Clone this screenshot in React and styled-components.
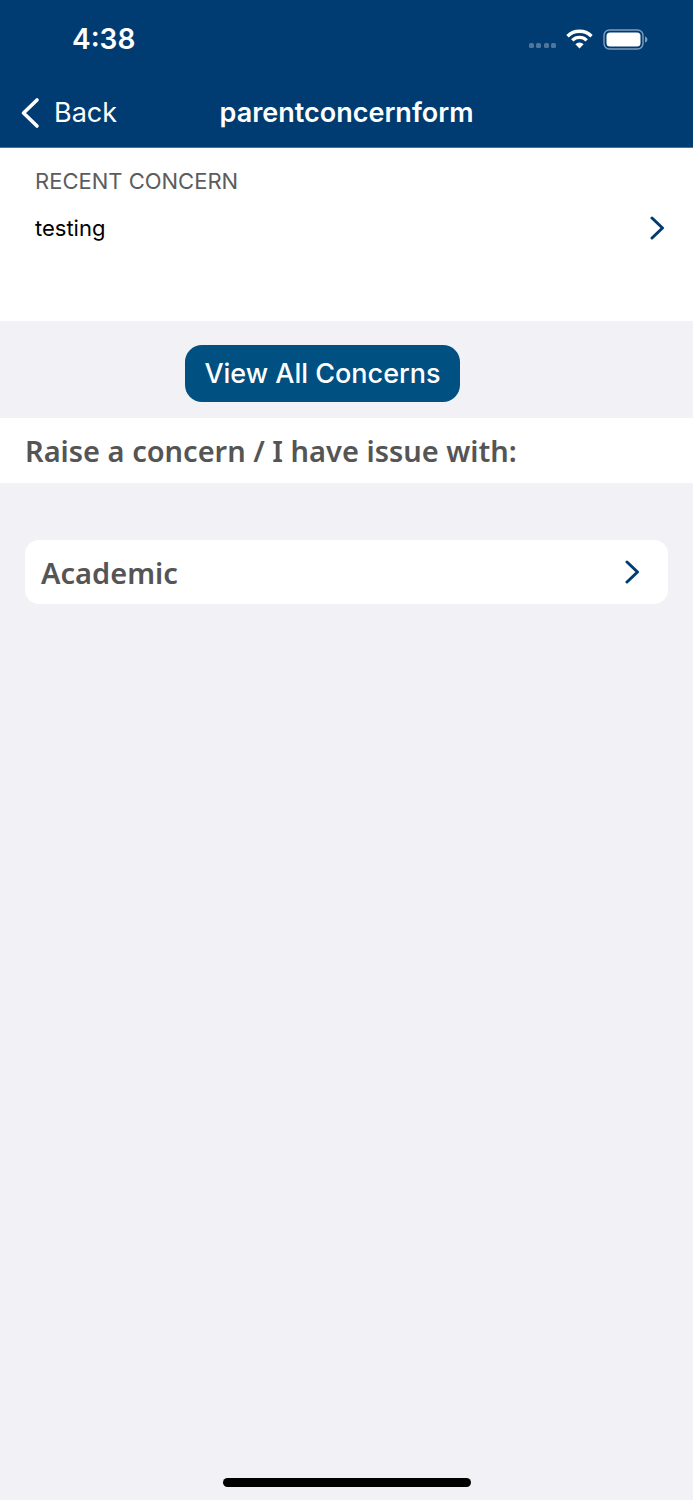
import styled, { createGlobalStyle } from "styled-components";

const GlobalStyle = createGlobalStyle`
  html, body {
    margin: 0;
    padding: 0;
    background: #f1f1f6;
  }
  * {
    box-sizing: border-box;
  }
`;

const App = () => {
  return (
    <Page>
      <GlobalStyle />
      <Header>
        <StatusBar>
          <Clock>4:38</Clock>
          <StatusIcons>
            <Signal>
              <Dot /><Dot /><Dot /><Dot />
            </Signal>
            <svg width="27" height="20" viewBox="0 0 27 20">
              <path d="M1.5 7.2 A17 17 0 0 1 25.5 7.2" fill="none" stroke="#fff" strokeWidth="3.4" />
              <path d="M6.3 11.4 A10.2 10.2 0 0 1 20.7 11.4" fill="none" stroke="#fff" strokeWidth="3.4" />
              <path d="M13.5 19.5 L9.4 15.2 A5.8 5.8 0 0 1 17.6 15.2 Z" fill="#fff" />
            </svg>
            <svg width="45" height="21" viewBox="0 0 45 21">
              <rect x="1" y="1" width="39" height="19" rx="5.5" fill="none" stroke="#7f9db8" strokeWidth="1.4" />
              <rect x="3.5" y="3.5" width="34" height="14" rx="3.5" fill="#fff" />
              <path d="M42 7.5 C43.6 8 44.4 9 44.4 10.5 C44.4 12 43.6 13 42 13.5 Z" fill="#7f9db8" />
            </svg>
          </StatusIcons>
        </StatusBar>
        <NavBar>
          <BackLink>
            <svg width="22" height="32" viewBox="0 0 22 32">
              <path d="M18 3 L4.5 16 L18 29" fill="none" stroke="#fff" strokeWidth="3.6" strokeLinecap="round" strokeLinejoin="round" />
            </svg>
            <BackLabel>Back</BackLabel>
          </BackLink>
          <NavTitle>parentconcernform</NavTitle>
        </NavBar>
      </Header>

      <RecentSection>
        <SectionLabel>RECENT CONCERN</SectionLabel>
        <RecentRow>
          <RecentText>testing</RecentText>
          <Chevron />
        </RecentRow>
      </RecentSection>

      <ButtonRow>
        <ViewAllButton>View All Concerns</ViewAllButton>
      </ButtonRow>

      <RaiseStrip>Raise a concern / I have issue with:</RaiseStrip>

      <CategoryCard>
        <CategoryName>Academic</CategoryName>
        <Chevron />
      </CategoryCard>

      <HomeIndicator />
    </Page>
  );
};

const Chevron = () => (
  <svg width="16" height="24" viewBox="0 0 16 24">
    <path d="M3 2 L13.5 12 L3 22" fill="none" stroke="#003c71" strokeWidth="3" strokeLinecap="round" strokeLinejoin="round" />
  </svg>
);

export default App;

const Page = styled.div`
  position: relative;
  width: 693px;
  height: 1500px;
  overflow: hidden;
  background: #f1f1f6;
  font-family: Inter, "Liberation Sans", sans-serif;
`;

const Header = styled.header`
  height: 148px;
  background: #003c71;
  color: #fff;
  border-bottom: 1px solid #4a7196;
`;

const StatusBar = styled.div`
  display: flex;
  align-items: center;
  justify-content: space-between;
  height: 78px;
  padding: 0 45px 0 72px;
`;

const Clock = styled.div`
  font-size: 28px;
  font-weight: 600;
`;

const StatusIcons = styled.div`
  display: flex;
  align-items: center;
  gap: 10px;
`;

const Signal = styled.div`
  display: flex;
  gap: 2.5px;
  margin-top: 12px;
`;

const Dot = styled.span`
  width: 5px;
  height: 5px;
  border-radius: 1.5px;
  background: #4f7698;
`;

const NavBar = styled.div`
  display: grid;
  grid-template-columns: 1fr auto 1fr;
  align-items: center;
  height: 69px;
`;

const BackLink = styled.div`
  display: flex;
  align-items: center;
  gap: 13px;
  padding-left: 19px;
`;

const BackLabel = styled.span`
  font-size: 27px;
  font-weight: 400;
`;

const NavTitle = styled.div`
  font-size: 27px;
  font-weight: 600;
`;

const RecentSection = styled.section`
  height: 173px;
  padding: 20px 28px 0 35px;
  background: #fff;
`;

const SectionLabel = styled.div`
  font-size: 22px;
  line-height: 26px;
  color: #5c5c5c;
`;

const RecentRow = styled.div`
  display: flex;
  align-items: center;
  justify-content: space-between;
  margin-top: 15px;
  height: 38px;
`;

const RecentText = styled.span`
  font-size: 22px;
  color: #000;
`;

const ButtonRow = styled.div`
  height: 97px;
  padding: 24px 0 0 185px;
`;

const ViewAllButton = styled.button`
  width: 275px;
  height: 57px;
  padding: 0;
  border: none;
  border-radius: 17px;
  background: #005082;
  color: #fff;
  font-family: inherit;
  font-size: 27px;
  font-weight: 500;
`;

const RaiseStrip = styled.div`
  height: 65px;
  padding-left: 25px;
  background: #fff;
  color: #555;
  font-family: "Noto Sans", "Open Sans", sans-serif;
  font-size: 29px;
  font-weight: 600;
  line-height: 65px;
`;

const CategoryCard = styled.div`
  display: flex;
  align-items: center;
  justify-content: space-between;
  width: 643px;
  height: 64px;
  margin: 57px 0 0 25px;
  padding: 0 28px 0 16px;
  background: #fff;
  border-radius: 14px;
`;

const CategoryName = styled.span`
  color: #555;
  font-family: "Noto Sans", "Open Sans", sans-serif;
  font-size: 29px;
  font-weight: 600;
`;

const HomeIndicator = styled.div`
  position: absolute;
  left: 223px;
  bottom: 13px;
  width: 248px;
  height: 9px;
  border-radius: 5px;
  background: #000;
`;
